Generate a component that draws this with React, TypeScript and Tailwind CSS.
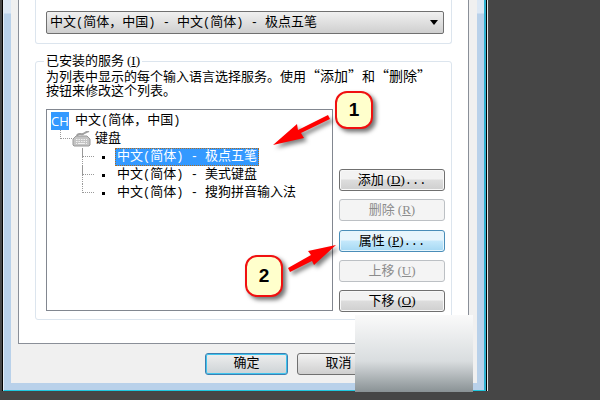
import type { ReactNode } from 'react'

const services = ['极点五笔', '美式键盘', '搜狗拼音输入法']

// Half-width characters sit next to the full-width CJK glyphs
function Half({ children }: { children: ReactNode }) {
  return <span className="whitespace-pre text-[12px]">{children}</span>
}

// Chinese quotation marks take a full em, so they need the CJK font
function Quoted({ children }: { children: ReactNode }) {
  return <span className="font-['Noto_Sans_CJK_SC',sans-serif] text-[14px]">“{children}”</span>
}

function Shortcut({ letter }: { letter: string }) {
  return (
    <span className="ml-[3px] font-['Liberation_Serif','Noto_Sans_CJK_SC',serif] text-[13px]">
      (<span className="underline underline-offset-1">{letter}</span>)
    </span>
  )
}

interface SideButtonProps {
  label: string
  letter: string
  dots?: boolean
  disabled?: boolean
  hot?: boolean
}

function SideButton({ label, letter, dots, disabled, hot }: SideButtonProps) {
  const base = 'h-[22px] w-full rounded-[3px] border leading-5 whitespace-nowrap'
  const normal = 'border-[#707070] bg-linear-to-b from-[#f2f2f2] from-45% via-[#dddddd] via-50% to-[#cfcfcf] shadow-[inset_0_0_0_1px_#f8f8f8]'
  const off = 'border-[#bcc0c4] bg-[#f4f4f4] text-[#8c8c8c]'
  const active = 'border-[#4a8db8] bg-linear-to-b from-[#e8f5fc] from-45% via-[#c4e8fb] via-50% to-[#a5d8f3] shadow-[inset_0_0_0_1px_#e6f6fd]'

  return (
    <button type="button" disabled={disabled} className={`${base} ${disabled ? off : hot ? active : normal}`}>
      {label}
      <Shortcut letter={letter} />
      {dots && <Half>...</Half>}
    </button>
  )
}

function KeyboardIcon() {
  return (
    <svg width="19" height="16" viewBox="0 0 19 16" className="shrink-0" aria-hidden="true">
      <path d="M5 5 C6 1 9 4 11 3 S14 1 17 0" fill="none" stroke="#a0a0a0" strokeWidth="2" />
      <path d="M4 5 H15 L18 8 V14 L17 15 H2 L1 14 V8 Z" fill="#c4c4c4" stroke="#999" />
      <path d="M4 8.5 H15 M4 10.5 H15" stroke="#f0f0f0" strokeDasharray="1.5 1" />
      <path d="M4 12.5 H5 M6 12.5 H13 M14 12.5 H15" stroke="#f0f0f0" />
    </svg>
  )
}

function ServiceTree() {
  return (
    <div className="h-[202px] min-w-0 flex-1 self-start border border-[#828790] bg-white pl-1 pt-[2px] leading-[18px]">
      <div className="flex items-center gap-[6px]">
        <span className="w-[18px] bg-[#3399ff] text-center font-['Open_Sans',sans-serif] text-[13px] text-white">CH</span>
        <span>
          中文<Half>(</Half>简体，中国<Half>)</Half>
        </span>
      </div>
      <div className="ml-[9px]">
        <div className="flex h-[18px] items-center">
          <span className="h-[9px] w-3 self-start border-b border-l border-dotted border-[#999]" />
          <KeyboardIcon />
          <span className="ml-1">键盘</span>
        </div>
        <ul className="ml-[22px]">
          {services.map((name, i) => (
            <li key={name} className="flex h-[18px]">
              <span className="h-[9px] w-3 border-b border-l border-dotted border-[#999]" />
              <span className="-ml-3 h-[18px] w-3 shrink-0">
                {i < services.length - 1 && <span className="block h-full border-l border-dotted border-[#999]" />}
              </span>
              <span className="ml-2 mt-2 size-[3px] shrink-0 bg-black" />
              <span
                className={
                  i === 0
                    ? 'ml-[10px] whitespace-nowrap border border-dotted border-[#b06a1c] bg-[#3399ff] px-px leading-4 text-white'
                    : 'ml-[10px] whitespace-nowrap border border-transparent px-px leading-4'
                }
              >
                中文<Half>(</Half>简体<Half>) - </Half>{name}
              </span>
            </li>
          ))}
        </ul>
      </div>
    </div>
  )
}

function Badge({ children, className }: { children: ReactNode; className: string }) {
  return (
    <span
      className={`absolute flex w-[38px] items-center justify-center rounded-[12px] border-2 border-[#f01010] bg-[#ffffcc] font-['Liberation_Sans',sans-serif] text-[19px] font-bold shadow-[3px_3px_4px_rgba(0,0,0,0.55)] ${className}`}
    >
      {children}
    </span>
  )
}

function Arrow({ points, className }: { points: string; className: string }) {
  return (
    <svg width="66" height="34" viewBox="0 0 66 34" className={`absolute overflow-visible drop-shadow-[3px_3px_2px_rgba(0,0,0,0.5)] ${className}`} aria-hidden="true">
      <polygon points={points} fill="#ff0000" />
    </svg>
  )
}

export default function App() {
  return (
    <div className="relative min-h-screen overflow-hidden bg-[#464646] pl-[2px] pr-28 font-['Liberation_Mono','Noto_Sans_CJK_SC',monospace] text-[13px] text-black">
      <div className="border-r border-[#e8e8e8]">
        <main className="border-x border-black">
          <div className="border-b border-l border-r-2 border-b-[#1fc8e0] border-l-[#e4edf6] border-r-[#2fb0cf] bg-linear-to-b from-[#dce8f5] from-[13px] to-[#b9d1ea] to-[14px] px-[7px] pb-[7px]">
            <div className="bg-[#f0f0f0] pb-2 pl-[7px] pr-2">
              <section className="border-x border-b border-[#8a8f98] bg-white px-4 pb-[23px]">
                <div className="h-[44px] rounded-b-[3px] border border-t-0 border-[#dce5ee] pl-[10px] pr-[7px] pt-[11px]">
                  <button
                    type="button"
                    aria-label="默认输入语言"
                    className="flex h-[23px] w-full items-center justify-between rounded-[2px] border border-[#707070] bg-linear-to-b from-[#f0f0f0] to-[#cfcfcf] pl-[3px] pr-[5px]"
                  >
                    <span className="whitespace-nowrap">
                      中文<Half>(</Half>简体，中国<Half>) - </Half>中文<Half>(</Half>简体<Half>) - </Half>极点五笔
                    </span>
                    <svg width="8" height="5" viewBox="0 0 8 5" aria-hidden="true">
                      <path d="M0 0 H8 L4 5 Z" fill="#000" />
                    </svg>
                  </button>
                </div>

                <fieldset className="mt-2 rounded-[3px] border border-[#dce5ee] pb-[7px] pl-[10px] pr-[6px]">
                  <legend className="-ml-[2px] px-[2px] leading-[18px]">
                    已安装的服务<Shortcut letter="I" />
                  </legend>
                  <p className="-mt-[3px] whitespace-nowrap leading-[14px]">
                    为列表中显示的每个输入语言选择服务。使用<Quoted>添加</Quoted>和<Quoted>删除</Quoted>
                    <br />
                    按钮来修改这个列表。
                  </p>
                  <div className="mt-[10px] flex gap-[6px]">
                    <ServiceTree />
                    <div className="mt-[60px] flex h-[143px] w-[106px] flex-col justify-between">
                      <SideButton label="添加" letter="D" dots />
                      <SideButton label="删除" letter="R" disabled />
                      <SideButton label="属性" letter="P" dots hot />
                      <SideButton label="上移" letter="U" disabled />
                      <SideButton label="下移" letter="O" />
                    </div>
                  </div>
                </fieldset>
              </section>

              <div className="mt-[9px] flex justify-end gap-[9px] pr-[89px]">
                <button type="button" className="h-[22px] w-[83px] rounded-[3px] border border-[#3c7fb1] bg-linear-to-b from-[#eeeeee] to-[#cdd3d6] leading-5 shadow-[inset_0_0_0_1px_#3fc4ee]">
                  确定
                </button>
                <button type="button" className="h-[22px] w-[83px] rounded-[3px] border border-[#707070] bg-linear-to-b from-[#f2f2f2] to-[#cfcfcf] leading-5">
                  取消
                </button>
              </div>
            </div>
          </div>
        </main>
      </div>

      <Badge className="left-[335px] top-[91px] h-[38px]">1</Badge>
      <Arrow className="left-[273px] top-[115px]" points="0,30 24,9 25,15 55,0 57,4 28,18 31,23" />
      <Badge className="left-[245px] top-[255px] h-[42px]">2</Badge>
      <Arrow className="left-[288px] top-[243px]" points="48,2 20,8 23,12 0,25 2,29 24,18 26,22" />
      <div className="absolute left-[355px] top-[315px] h-[77px] w-[118px] bg-linear-to-b from-[#fafafa] via-[#d9dddf] via-60% to-[#8a9295]" />
    </div>
  )
}
